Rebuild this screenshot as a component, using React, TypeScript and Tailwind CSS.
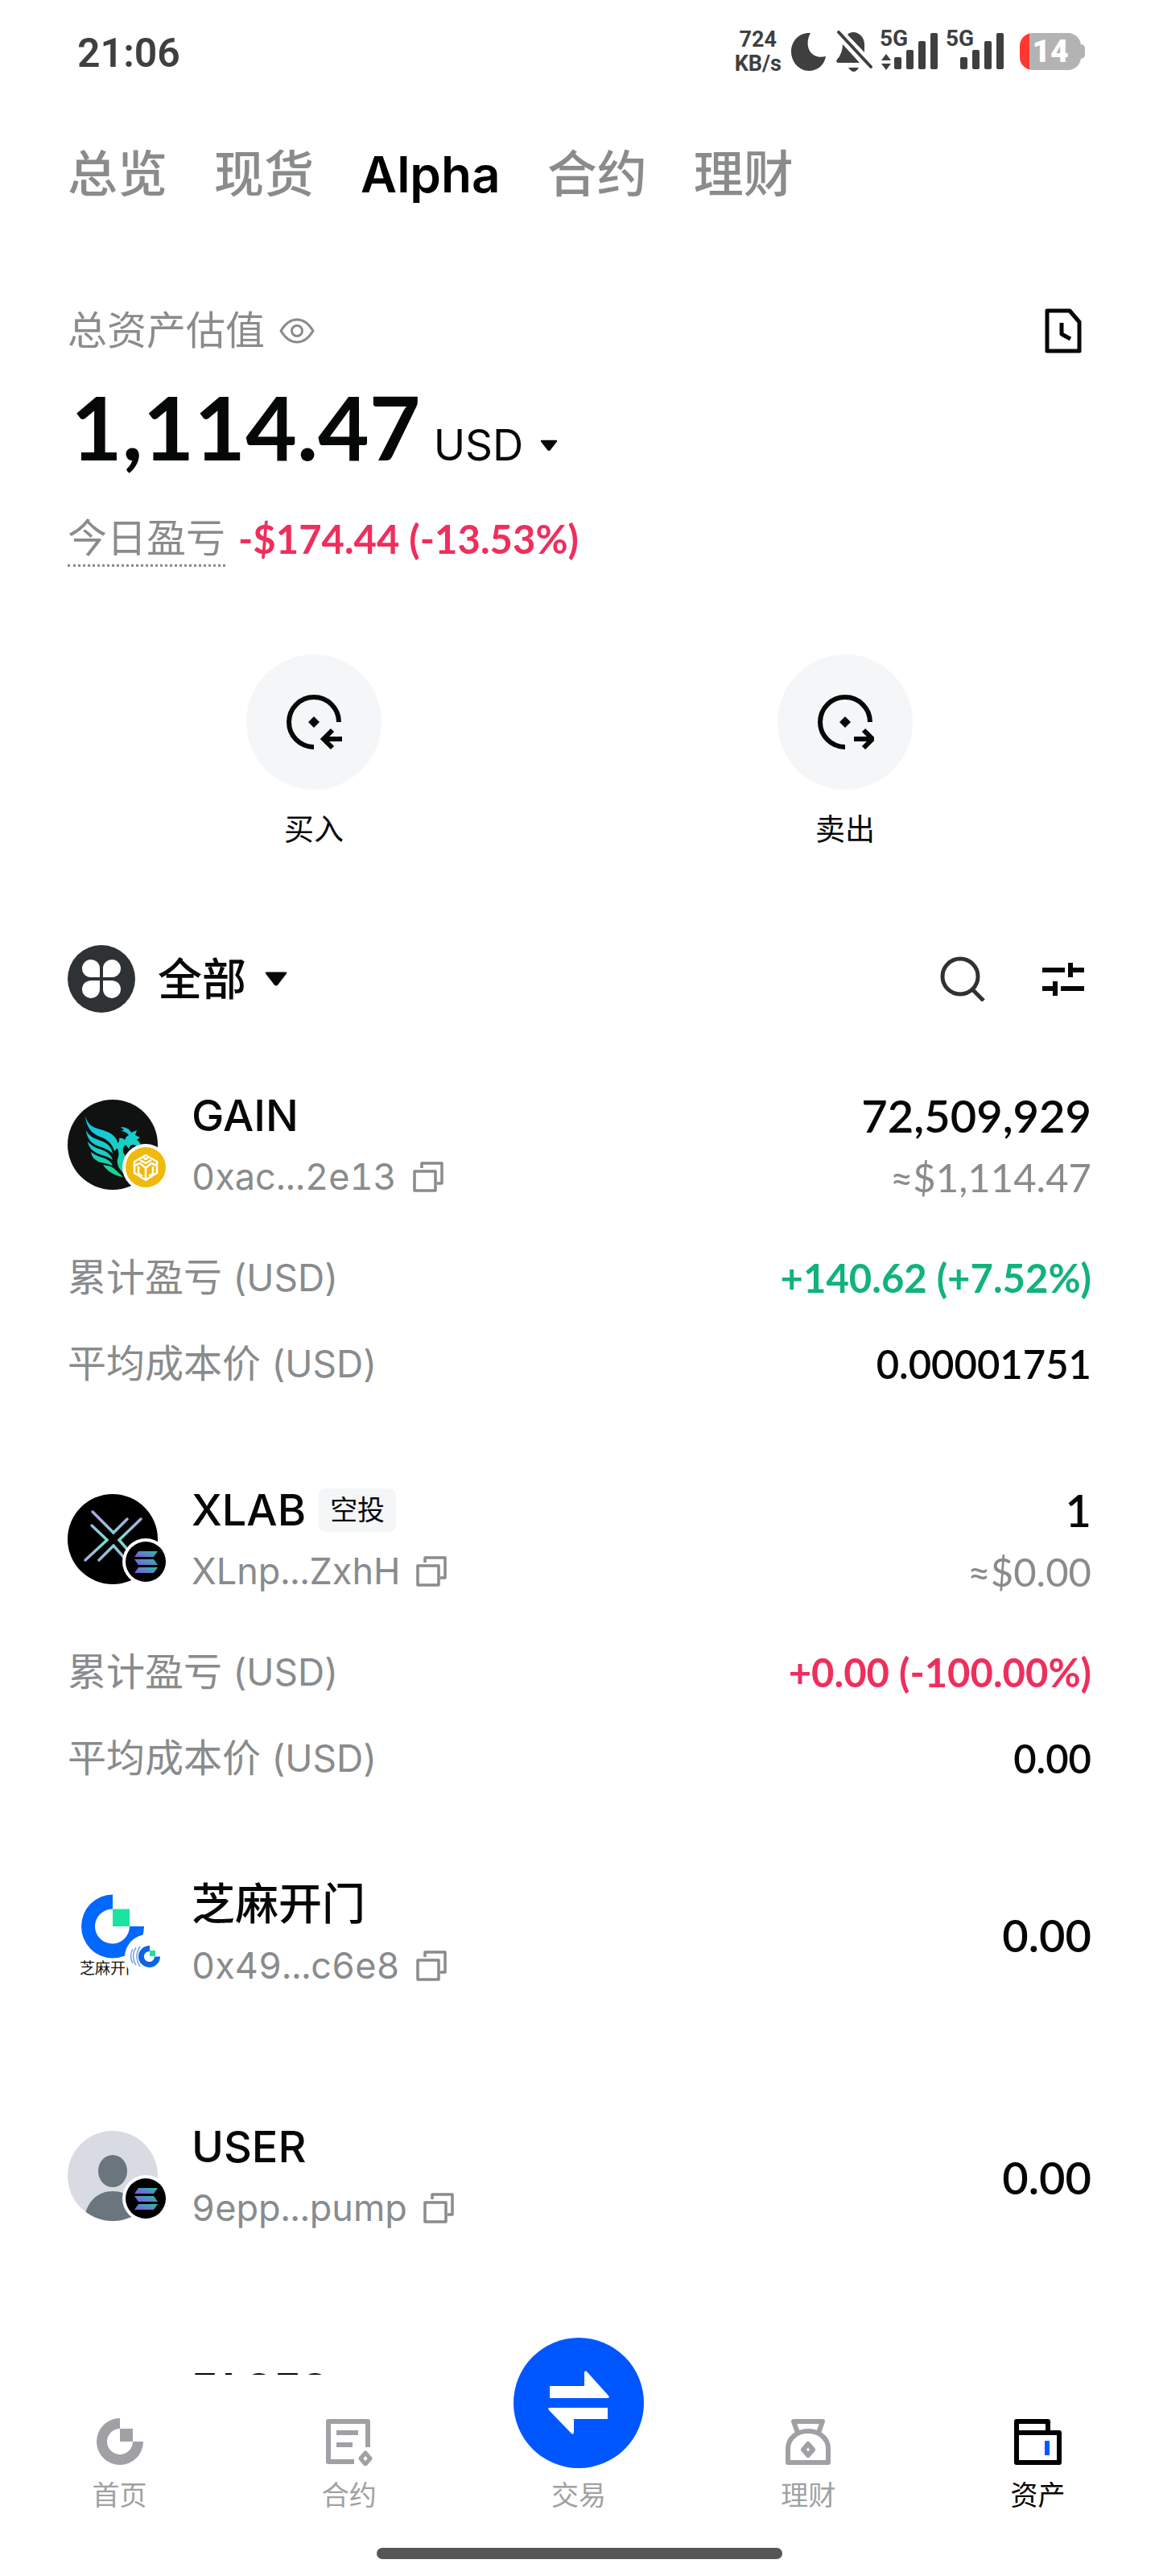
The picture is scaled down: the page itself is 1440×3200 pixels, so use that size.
import React, { useState } from 'react';

type Asset = {
  id: string;
  name: string;
  tag?: string;
  address: string;
  amount: string;
  value?: string;
  pnl?: string;
  pnlUp?: boolean;
  cost?: string;
  logo: React.ReactNode;
};

const SolanaBadge = () => <g>
    <circle cx="97" cy="84" r="29" fill="#fff" />
    <circle cx="97" cy="84" r="25" fill="#000" />
    <g fill="url(#solana)">
      <path d="M88 71h24l-5 7H83z" />
      <path d="M83 81h24l5 7H88z" />
      <path d="M88 91h24l-5 7H83z" />
    </g>
  </g>;

const SolanaGradient = () => <linearGradient id="solana" x1="0" y1="1" x2="1" y2="0">
    <stop offset="0" stopColor="#8a4fe0" />
    <stop offset="0.5" stopColor="#5a86c8" />
    <stop offset="1" stopColor="#1fc79a" />
  </linearGradient>;

const GainLogo = () => <svg viewBox="0 0 124 112" className="h-[112px] w-[124px]" aria-hidden="true">
    <defs>
      <linearGradient id="phoenix" gradientUnits="userSpaceOnUse" x1="40" y1="20" x2="60" y2="92">
        <stop offset="0" stopColor="#14bfe6" />
        <stop offset="0.6" stopColor="#19cfc4" />
        <stop offset="1" stopColor="#14d68e" />
      </linearGradient>
    </defs>
    <circle cx="56" cy="56" r="56" fill="#101111" />
    <g fill="url(#phoenix)">
      <path d="M22 20c3 12 10 15 22 18 13 4 20 11 18 22l-4 4c-2-9-9-15-18-18-11-4-17-13-18-26z" />
      <path d="M23 38c4 8 10 10 18 13 9 3 14 9 15 16-5-5-11-7-17-9-9-3-15-9-16-20z" />
      <path d="M25 52c5 6 10 8 17 10 8 3 12 7 14 13-5-4-10-5-16-7-8-3-14-8-15-16z" />
      <path d="M29 65c5 4 9 5 14 7 7 2 11 5 13 10-5-2-9-3-15-4-6-2-11-6-12-13z" />
      <path d="M44 81c5 1 9 1 13 4l12 11c-9-1-19-6-25-15z" />
      <path d="M64 48c5-1 8 2 9 7-5 4-6 9-1 15 3 5 2 14-2 22-7-6-9-13-8-18 3-7 1-13-3-18 4-2 6-4 5-8z" />
      <path d="M66 34c7 0 11 3 13 7l7-3-2 6 6 3-4 3c5 3 6 8 3 14-1-5-4-8-8-8-3 0-5 3-4 6l-5-6c-3-7 1-10 4-12-3-4-7-5-11-5 3 0 4-1 5-2-2-1-3-2-4-3z" />
    </g>
    <circle cx="97" cy="84" r="29" fill="#fff" />
    <circle cx="97" cy="84" r="25" fill="#f0b90b" />
    <g fill="none" stroke="#fff" strokeWidth="2.5" strokeLinejoin="round">
      <path d="M97 69l14 8v14l-14 9-14-9V77z" />
      <path d="M90 75l7 4 7-4M83 82l7-3 7 6 7-6 7 3M97 85v14M88 83v9l5 3M106 83v9l-5 3M94 72l3 2 3-2" />
    </g>
  </svg>;

const XlabLogo = () => <svg viewBox="0 0 124 112" className="h-[112px] w-[124px]" aria-hidden="true">
    <defs>
      <linearGradient id="xlab" gradientUnits="userSpaceOnUse" x1="0" y1="22" x2="0" y2="92">
        <stop offset="0" stopColor="#c19ae6" />
        <stop offset="0.5" stopColor="#79dfd3" />
        <stop offset="1" stopColor="#b99ae4" />
      </linearGradient>
      <SolanaGradient />
    </defs>
    <circle cx="56" cy="56" r="56" fill="#000" />
    <path d="M31 22L57 48L74 31M91 31L64 57L84 80M30 39L49 57L22 82M39 82L57 64L73 82" fill="none" stroke="url(#xlab)" strokeWidth="3.5" strokeLinecap="round" />
    <SolanaBadge />
  </svg>;

const SesameLogo = () => <svg viewBox="0 0 124 112" className="h-[112px] w-[124px]" aria-hidden="true">
    <path d="M56 7.500A39 39.500 0 1 0 95 47H77A21.500 21.500 0 1 1 56 25.500z" fill="#0067ff" />
    <path d="M56 25.500h21V47H56z" fill="#1be3a1" />
    <text x="15" y="106" fontSize="19" fill="#111">芝麻开门</text>
    <circle cx="99" cy="85" r="28" fill="#fff" />
    <path d="M102 71a13.500 13.500 0 1 0 13 13.500h-7a6.500 6.500 0 1 1-6-6.500z" fill="#0d63e6" />
    <path d="M102 77h7v7h-7z" fill="#1be3a1" />
    <path d="M90 72q-8 12 0 25M85 73q-7 11 0 22M81 75q-5 9 0 18" fill="none" stroke="#6fa4ec" strokeWidth="1.500" />
  </svg>;

const UserLogo = () => <svg viewBox="0 0 124 112" className="h-[112px] w-[124px]" aria-hidden="true">
    <defs>
      <clipPath id="userClip"><circle cx="56" cy="56" r="56" /></clipPath>
    </defs>
    <g clipPath="url(#userClip)">
      <path d="M0 0h112v112H0z" fill="#d8dce2" />
      <ellipse cx="56" cy="50" rx="18" ry="20" fill="#6b757d" />
      <path d="M20 112c3-24 17-37 36-37s33 13 36 37z" fill="#6b757d" />
    </g>
    <SolanaBadge />
  </svg>;

const assets: Asset[] = [
  { id: 'gain', name: 'GAIN', address: '0xac...2e13', amount: '72,509,929', value: '≈$1,114.47', pnl: '+140.62 (+7.52%)', pnlUp: true, cost: '0.00001751', logo: <GainLogo /> },
  { id: 'xlab', name: 'XLAB', tag: '空投', address: 'XLnp...ZxhH', amount: '1', value: '≈$0.00', pnl: '+0.00 (-100.00%)', cost: '0.00', logo: <XlabLogo /> },
  { id: 'sesame', name: '芝麻开门', address: '0x49...c6e8', amount: '0.00', logo: <SesameLogo /> },
  { id: 'user', name: 'USER', address: '9epp...pump', amount: '0.00', logo: <UserLogo /> },
  { id: 'faces', name: 'FACES', address: '', amount: '', logo: null }
];

const Caret = ({ className }: { className: string }) => <svg viewBox="0 0 26 18" className={className} aria-hidden="true">
    <path d="M2 1h22q2 0 1 2L15 16q-2 2-4 0L1 3Q0 1 2 1z" fill="currentColor" />
  </svg>;

const CopyIcon = () => <svg viewBox="0 0 38 38" className="h-[38px] w-[38px]" fill="none" stroke="currentColor" strokeWidth="3.5" aria-hidden="true">
    <path d="M2 12h26v24H2zM11 8V2h25v25h-6" strokeLinejoin="round" />
  </svg>;

const SignalBars = () => <svg viewBox="0 0 54 46" className="h-[46px] w-[54px]" fill="currentColor" aria-hidden="true">
    <rect x="0" y="30" width="9" height="15" rx="2" />
    <rect x="15" y="21" width="9" height="24" rx="2" />
    <rect x="30" y="10" width="9" height="35" rx="2" />
    <rect x="45" y="0" width="9" height="45" rx="2" />
  </svg>;

const StatusBar = () => <header className="flex h-[132px] items-center justify-between pl-3 pr-2 font-[Roboto,sans-serif] text-[#3f3f3f]">
    <time className="text-[50px] font-semibold leading-[60px]">21:06</time>
    <div className="flex items-center pb-1">
      <div className="text-center text-[27px] font-bold leading-[30px]">
        <p>724</p>
        <p>KB/s</p>
      </div>
      <svg viewBox="0 0 44 48" className="ml-3 h-[48px] w-[44px]" fill="currentColor" aria-hidden="true">
        <path d="M24 1C16 15 22 35 43 30C41 41 33 48 22 48C10 48 0 37 0 24S10 0 24 1z" />
      </svg>
      <svg viewBox="0 0 46 54" className="ml-3 h-[54px] w-[46px]" fill="currentColor" aria-hidden="true">
        <path d="M14 6C17 3 20 3 21 3C29 3 35 10 35 18V28zM8 18L29 41H2Q-1 40 1 37Q8 29 8 18zM15 47h13q-6 10-13 0z" />
        <path d="M3 3L43 46" stroke="currentColor" strokeWidth="4" strokeLinecap="round" />
      </svg>
      <div className="relative ml-[26px]">
        <SignalBars />
        <span className="absolute -left-[18px] -top-2 text-[28px] font-bold leading-[30px]">5G</span>
        <svg viewBox="0 0 12 20" className="absolute -left-4 bottom-0 h-[20px] w-[12px]" fill="currentColor" aria-hidden="true">
          <path d="M6 0l6 8H0zM6 20l6-8H0z" />
        </svg>
      </div>
      <div className="relative ml-7">
        <SignalBars />
        <span className="absolute -left-[18px] -top-2 text-[28px] font-bold leading-[30px]">5G</span>
      </div>
      <div className="ml-5 flex items-center">
        <div className="flex h-[46px] w-[76px] items-center justify-center overflow-hidden rounded-2xl bg-[linear-gradient(90deg,#ff3830_12px,#b3b3b3_12px)] text-[39px] font-black leading-[46px] text-white">14</div>
        <div className="h-[18px] w-[5px] rounded-r-md bg-[#b3b3b3]" />
      </div>
    </div>
  </header>;

const tabs = ['总览', '现货', 'Alpha', '合约', '理财'];

const AssetRow = ({ asset }: { asset: Asset }) => <li className={asset.pnl ? 'pb-[126px]' : 'pb-[169px]'}>
    <div className="flex items-start">
      <div className="mt-2 h-[112px] w-[124px] shrink-0">{asset.logo}</div>
      <div className="ml-[30px] flex flex-col gap-5">
        <div className="flex h-[56px] items-center gap-4">
          <h2 className="text-[54px] font-medium leading-[56px]">{asset.name}</h2>
          {asset.tag && <span className="rounded-lg bg-[#f4f6f8] px-3.5 text-[34px] leading-[54px]">{asset.tag}</span>}
        </div>
        <div className="flex h-[56px] items-center gap-5 text-[#898b8d]">
          <span className="text-[45px] leading-[56px] tabular-nums">{asset.address}</span>
          {asset.address && <button type="button" aria-label="复制合约地址"><CopyIcon /></button>}
        </div>
      </div>
      <div className={`ml-auto flex flex-col gap-5 text-right font-[Lato,sans-serif] ${asset.value ? '' : 'self-center'}`}>
        <span className="text-[56px] font-semibold leading-[56px]">{asset.amount}</span>
        {asset.value && <span className="text-[49px] leading-[56px] text-[#898b8d]">{asset.value}</span>}
      </div>
    </div>
    {asset.pnl && <dl className="mt-[69px] flex flex-col gap-[51px] text-[49px] leading-[56px]">
        <div className="flex h-[56px] justify-between">
          <dt className="text-[48px] text-[#898b8d]">累计盈亏 <span className="text-[46px]">(USD)</span></dt>
          <dd className={`font-[Lato,sans-serif] font-bold ${asset.pnlUp ? 'text-[#12b27d]' : 'text-[#ee2f5d]'}`}>{asset.pnl}</dd>
        </div>
        <div className="flex h-[56px] justify-between">
          <dt className="text-[48px] text-[#898b8d]">平均成本价 <span className="text-[46px]">(USD)</span></dt>
          <dd className="font-[Lato,sans-serif] font-semibold">{asset.cost}</dd>
        </div>
      </dl>}
  </li>;

const navItems = [
  {
    label: '首页',
    icon: <svg viewBox="0 0 60 60" className="h-[60px] w-[60px]" fill="currentColor" aria-hidden="true">
        <path d="M30 1A29 29 0 1 0 59 30H46A16 16 0 1 1 30 14z" />
        <path d="M30 14h16v16H30z" />
      </svg>
  },
  {
    label: '合约',
    icon: <svg viewBox="0 0 60 60" className="h-[60px] w-[60px]" fill="none" stroke="currentColor" strokeWidth="6" aria-hidden="true">
        <path d="M36 55H4V5h49v32" strokeLinejoin="round" />
        <path d="M14 19h27M14 34h20" />
        <path d="M50 44l6 7-6 7-6-7z" strokeWidth="5" strokeLinejoin="round" />
      </svg>
  },
  { label: '交易', icon: null },
  {
    label: '理财',
    icon: <svg viewBox="0 0 60 60" className="h-[60px] w-[60px]" fill="none" stroke="currentColor" strokeWidth="6" strokeLinejoin="round" aria-hidden="true">
        <path d="M17 19L12 5h36l-5 14" />
        <path d="M5 56V39C5 26 16 17 30 17s25 9 25 22v17z" />
        <path d="M30 33l6 7-6 7-6-7z" />
      </svg>
  },
  {
    label: '资产',
    icon: <svg viewBox="0 0 60 60" className="h-[60px] w-[60px]" fill="none" stroke="currentColor" strokeWidth="6" strokeLinejoin="round" aria-hidden="true">
        <path d="M4 19h53v37H4zM4 19V5h39v14" />
        <path d="M42 29v18" stroke="#0057ff" />
      </svg>
  }
];

const BottomNav = () => <nav className="relative h-[250px] shrink-0 bg-white px-1.5">
    <ul className="grid grid-cols-5 pr-0.5 pt-[53px]">
      {navItems.map(item => <li key={item.label}>
          <a href="#" className={`flex flex-col items-center ${item.label === '资产' ? 'text-black' : 'text-[#9fa1a4]'}`}>
            {item.icon || <span className="relative h-[60px] w-[162px]">
                <span className="absolute bottom-[-3px] left-0 flex h-[162px] w-[162px] items-center justify-center rounded-full bg-[#0057ff]">
                  <svg viewBox="0 0 76 80" className="h-[80px] w-[76px]" fill="#fff" aria-hidden="true">
                    <path d="M2 19h43V2q1-3 3-1l27 30q2 3-1 3H2zM74 46v14H32v17q-1 3-3 1L1 49q-2-3 1-3z" />
                  </svg>
                </span>
              </span>}
            <span className="mt-[13px] text-[34px] leading-[48px]">{item.label}</span>
          </a>
        </li>)}
    </ul>
    <div className="mx-auto mt-[41px] h-[14px] w-[504px] rounded-full bg-[#565656]" />
  </nav>;

export default function App() {
  const [active, setActive] = useState('Alpha');

  return <div className="flex h-screen flex-col bg-white font-['Inter','Noto_Sans_CJK_SC',sans-serif] text-[#060808]" lang="zh-CN">
      <main className="min-h-0 flex-1 overflow-hidden px-[84px]">
        <StatusBar />
        <div className="flex gap-[58px] pt-[43px] text-[62px] leading-[84px]">
          {tabs.map(tab => <button key={tab} type="button" onClick={() => setActive(tab)} className={active === tab ? 'font-semibold text-black' : 'font-medium text-[#898b8d]'}>
              {tab}
            </button>)}
        </div>

        <section className="mt-[120px]">
          <div className="flex h-[64px] items-center justify-between">
            <div className="flex items-center gap-[18px] text-[#898b8d]">
              <h1 className="text-[49px] leading-[64px]">总资产估值</h1>
              <button type="button" aria-label="隐藏资产">
                <svg viewBox="0 0 44 32" className="h-[32px] w-[44px]" fill="none" stroke="currentColor" strokeWidth="3" aria-hidden="true">
                  <path d="M2 16C8 6 15 2 22 2s14 4 20 14C36 26 29 30 22 30S8 26 2 16z" strokeLinejoin="round" />
                  <circle cx="22" cy="16" r="6.500" />
                </svg>
              </button>
            </div>
            <button type="button" aria-label="历史记录" className="mr-3">
              <svg viewBox="0 0 46 56" className="h-[56px] w-[46px]" fill="none" stroke="currentColor" strokeWidth="5" strokeLinejoin="round" aria-hidden="true">
                <path d="M3 3h28l12 14v36H3z" />
                <path d="M21 18v14l11 6" />
              </svg>
            </button>
          </div>
          <div className="mt-[26px] flex h-[120px] items-baseline gap-4 leading-[120px]">
            <strong className="pl-1 font-[Lato,sans-serif] text-[110px] font-bold">1,114.47</strong>
            <label className="flex items-center gap-5">
              <select aria-label="计价货币" className="appearance-none bg-transparent text-[53px] leading-[64px]">
                <option>USD</option>
              </select>
              <Caret className="h-[15px] w-[22px]" />
            </label>
          </div>
          <div className="mt-[48px] flex gap-4 text-[49px] leading-[64px]">
            <span className="border-b-[3px] border-dotted border-[#898b8d] text-[#898b8d]">今日盈亏</span>
            <span className="font-[Lato,sans-serif] font-bold text-[#ee2f5d]">-$174.44 (-13.53%)</span>
          </div>
        </section>

        <section className="-mx-6 mt-[109px] grid grid-cols-2">
          <button type="button" className="flex flex-col items-center gap-[26px]">
            <span className="flex h-[168px] w-[168px] items-center justify-center rounded-full bg-[#f4f6f8]">
              <svg viewBox="0 0 72 72" className="h-[72px] w-[72px]" fill="none" stroke="currentColor" strokeWidth="6" aria-hidden="true">
                <path d="M67 36A31 31 0 1 0 36 67" />
                <path d="M36 29l7 7-7 7-7-7z" fill="currentColor" stroke="none" />
                <path d="M71 57H50M59 46L48 57l11 11" strokeWidth="6" />
              </svg>
            </span>
            <span className="text-[37px] leading-[48px]">买入</span>
          </button>
          <button type="button" className="flex flex-col items-center gap-[26px]">
            <span className="flex h-[168px] w-[168px] items-center justify-center rounded-full bg-[#f4f6f8]">
              <svg viewBox="0 0 72 72" className="h-[72px] w-[72px]" fill="none" stroke="currentColor" strokeWidth="6" aria-hidden="true">
                <path d="M67 36A31 31 0 1 0 36 67" />
                <path d="M36 29l7 7-7 7-7-7z" fill="currentColor" stroke="none" />
                <path d="M47 57h21M59 46l11 11-11 11" strokeWidth="6" />
              </svg>
            </span>
            <span className="text-[37px] leading-[48px]">卖出</span>
          </button>
        </section>

        <section className="mt-[119px] flex h-[84px] items-center">
          <svg viewBox="0 0 84 84" className="h-[84px] w-[84px]" aria-hidden="true">
            <circle cx="42" cy="42" r="42" fill="#2f3235" />
            <g fill="#fff">
              <path d="M40 40H30a11 11 0 1 1 10-11zM44 40h10a11 11 0 1 0-10-11zM40 44H30a11 11 0 1 0 10 11zM44 44h10a11 11 0 1 1-10 11z" />
            </g>
          </svg>
          <label className="ml-7 flex items-center gap-[22px]">
            <select aria-label="网络" className="appearance-none bg-transparent text-[55px] font-medium leading-[72px]">
              <option>全部</option>
            </select>
            <Caret className="h-[20px] w-[28px]" />
          </label>
          <button type="button" aria-label="搜索" className="ml-auto">
            <svg viewBox="0 0 56 56" className="h-[56px] w-[56px]" fill="none" stroke="#2f3235" strokeWidth="5" aria-hidden="true">
              <circle cx="25" cy="25" r="22" />
              <path d="M40 41l14 14" />
            </svg>
          </button>
          <button type="button" aria-label="筛选" className="ml-[70px] mr-2">
            <svg viewBox="0 0 54 44" className="h-[44px] w-[54px]" fill="none" stroke="currentColor" strokeWidth="6" aria-hidden="true">
              <path d="M1 11h28M36 2v18M36 11h17M1 34h16M17 25v18M24 34h29" />
            </svg>
          </button>
        </section>

        <ul className="mt-[100px]">
          {assets.map(asset => <AssetRow key={asset.id} asset={asset} />)}
        </ul>
      </main>
      <BottomNav />
    </div>;
}
